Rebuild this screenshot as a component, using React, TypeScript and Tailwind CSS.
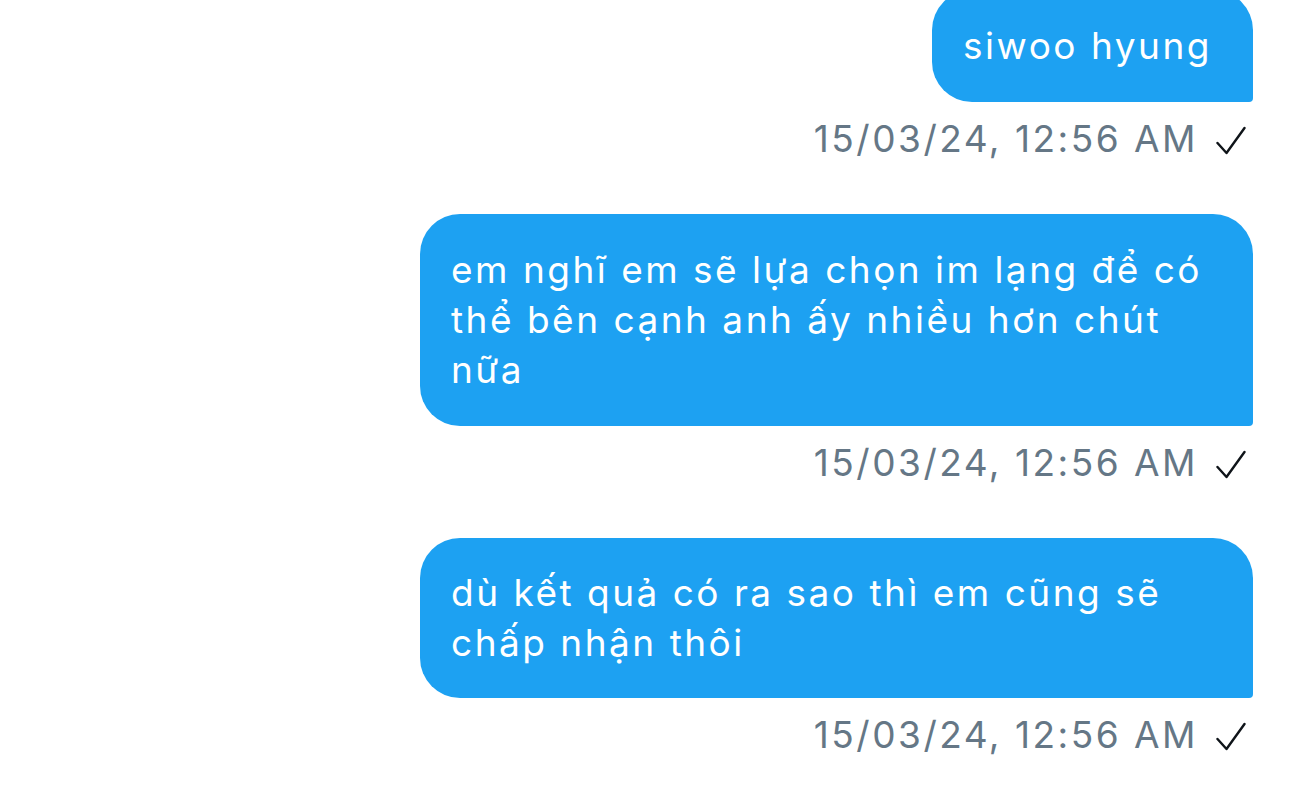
import React from "react";

function Check() {
  return (
    <svg width="32" height="32" viewBox="0 0 32 32" className="ml-[18px] shrink-0" fill="none">
      <path d="M1.5 20 L10.5 30 L28.5 5" stroke="#0f1419" strokeWidth="2.4" strokeLinecap="round" strokeLinejoin="round" />
    </svg>
  );
}

function Stamp() {
  return (
    <div className="mt-[15px] flex h-[44px] items-center pr-[5px] text-[37px] leading-[44px] tracking-[2.5px] text-[#657786]">
      <span>15/03/24, 12:56 AM</span>
      <Check />
    </div>
  );
}

export default function App() {
  return (
    <div
      className="flex h-[788px] w-[1290px] flex-col items-end overflow-hidden bg-white pr-[37px]"
      style={{ fontFamily: "Inter, 'Noto Sans', sans-serif" }}
    >
      <div className="mt-[-10px] rounded-[40px] rounded-br-[4px] bg-[#1da1f2] py-[31px] pl-[31px] pr-[41px] text-[37px] leading-[50px] tracking-[2.5px] text-white">
        siwoo hyung
      </div>
      <Stamp />
      <div className="mt-[53px] w-[833px] rounded-[40px] rounded-br-[4px] bg-[#1da1f2] px-[31px] py-[31px] text-[37px] leading-[50px] tracking-[2.5px] text-white">
        em nghĩ em sẽ lựa chọn im lạng để có
        <br />
        thể bên cạnh anh ấy nhiều hơn chút
        <br />
        nữa
      </div>
      <Stamp />
      <div className="mt-[53px] w-[833px] rounded-[40px] rounded-br-[4px] bg-[#1da1f2] px-[31px] py-[30px] text-[37px] leading-[50px] tracking-[2.5px] text-white">
        dù kết quả có ra sao thì em cũng sẽ
        <br />
        chấp nhận thôi
      </div>
      <Stamp />
    </div>
  );
}
